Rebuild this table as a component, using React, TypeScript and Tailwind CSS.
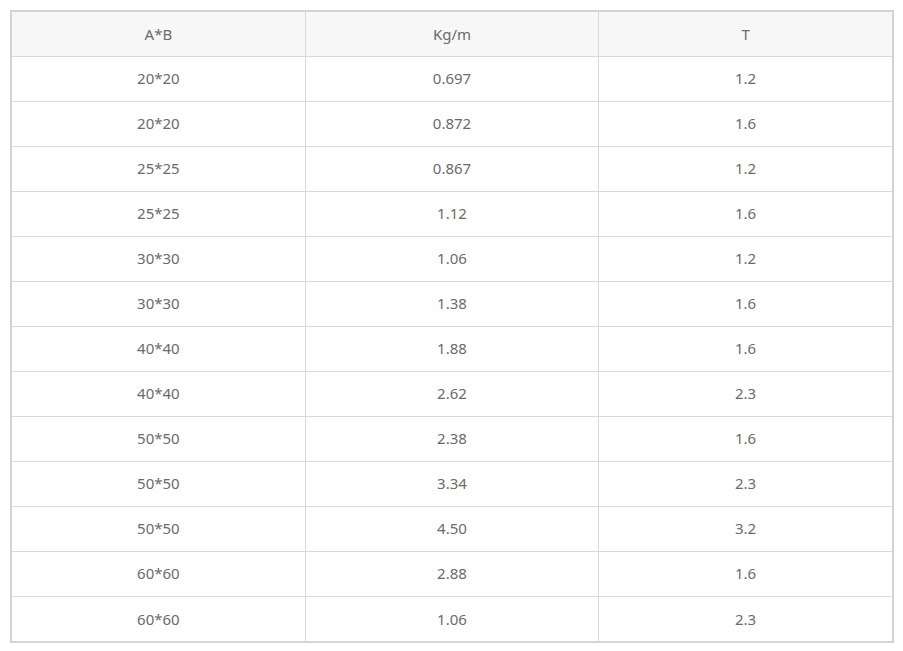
const rows: [string, string, string][] = [
  ["20*20", "0.697", "1.2"],
  ["20*20", "0.872", "1.6"],
  ["25*25", "0.867", "1.2"],
  ["25*25", "1.12", "1.6"],
  ["30*30", "1.06", "1.2"],
  ["30*30", "1.38", "1.6"],
  ["40*40", "1.88", "1.6"],
  ["40*40", "2.62", "2.3"],
  ["50*50", "2.38", "1.6"],
  ["50*50", "3.34", "2.3"],
  ["50*50", "4.50", "3.2"],
  ["60*60", "2.88", "1.6"],
  ["60*60", "1.06", "2.3"],
];

export default function App() {
  return (
    <div className="min-h-screen bg-white p-[10px] font-['Noto_Sans',sans-serif] text-[15px] text-[#6b6b6b]">
      <div className="w-[884px] border-2 border-[#d4d4d4]">
        <table className="w-full table-fixed border-collapse">
          <thead>
            <tr className="h-[44px] bg-[#f7f7f7]">
              <th className="w-1/3 border-r border-b border-[#d9d9d9] font-normal">A*B</th>
              <th className="w-1/3 border-r border-b border-[#d9d9d9] font-normal">Kg/m</th>
              <th className="w-1/3 border-b border-[#d9d9d9] font-normal">T</th>
            </tr>
          </thead>
          <tbody>
            {rows.map((r, i) => (
              <tr key={i} className="h-[45px]">
                <td className={`border-r border-[#d9d9d9] text-center ${i < rows.length - 1 ? "border-b" : ""}`}>{r[0]}</td>
                <td className={`border-r border-[#d9d9d9] text-center ${i < rows.length - 1 ? "border-b" : ""}`}>{r[1]}</td>
                <td className={`border-[#d9d9d9] text-center ${i < rows.length - 1 ? "border-b" : ""}`}>{r[2]}</td>
              </tr>
            ))}
          </tbody>
        </table>
      </div>
    </div>
  );
}
